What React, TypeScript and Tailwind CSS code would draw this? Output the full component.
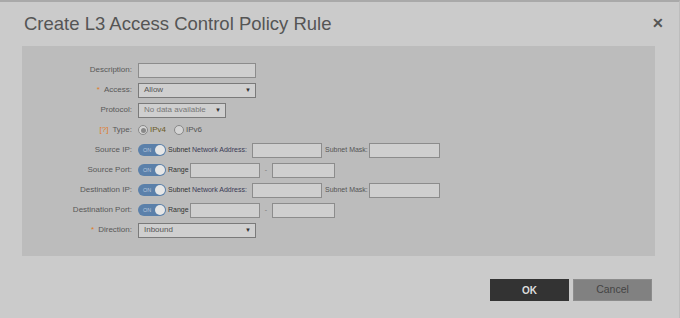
import React from 'react';

const font = { fontFamily: '"Liberation Sans", Arial, sans-serif' };

const Label: React.FC<{ text: string; mark?: string }> = ({ text, mark }) => (
  <div className="flex justify-end items-center text-[8px] text-[#585858] pr-[6px]">
    {mark && <span className="text-[#e07b1f] mr-[4px]">{mark}</span>}
    {text}
  </div>
);

const Input: React.FC<{ w: string }> = ({ w }) => (
  <div className={`${w} h-[15px] shrink-0 bg-[#cfcfcf] border border-[#8c8c8c]`} />
);

const Select: React.FC<{ w: string; value: string; dim?: boolean }> = ({ w, value, dim }) => (
  <div
    className={`${w} h-[15px] bg-[#cfcfcf] border border-[#7a7a7a] flex items-center justify-between pl-[5px] pr-[4px] text-[8px] ${
      dim ? 'text-[#777]' : 'text-[#555]'
    }`}
  >
    <span>{value}</span>
    <span className="text-[6px] text-[#333]">▼</span>
  </div>
);

const Toggle: React.FC = () => (
  <div className="w-[28px] h-[12px] shrink-0 rounded-full bg-[#5b80aa] flex items-center justify-between pl-[5px] pr-[1px]">
    <span className="text-[5.5px] text-[#b8c8dc]">ON</span>
    <span className="w-[10px] h-[10px] rounded-full bg-[#e6e6e6]" />
  </div>
);

const Row: React.FC<{ label: string; mark?: string; children: React.ReactNode }> = ({ label, mark, children }) => (
  <div className="grid grid-cols-[116px_1fr] h-[20px]">
    <Label text={label} mark={mark} />
    <div className="flex items-center text-[7px] whitespace-nowrap">{children}</div>
  </div>
);

const SubnetFields: React.FC = () => (
  <>
    <Toggle />
    <span className="ml-[2px] w-[24px] shrink-0 text-[#333]">Subnet</span>
    <span className="w-[60px] shrink-0 text-[#3a3a55]">Network Address:</span>
    <Input w="w-[70px]" />
    <span className="ml-[3px] w-[44px] shrink-0 text-[#555]">Subnet Mask:</span>
    <Input w="w-[71px]" />
  </>
);

const RangeFields: React.FC = () => (
  <>
    <Toggle />
    <span className="ml-[2px] w-[22px] shrink-0 text-[#333]">Range</span>
    <Input w="w-[70px]" />
    <span className="w-[12px] shrink-0 text-center text-[#777]">-</span>
    <Input w="w-[63px]" />
  </>
);

export default function App() {
  return (
    <div style={font} className="w-[680px] h-[318px] bg-[#cbcbcb] border-t-2 border-[#a9a9a9] border-r border-r-[#bdbdbd] flex flex-col">
      <div className="flex items-start justify-between pl-[24px] pr-[15px] pt-[11px] h-[44px]">
        <h1 className="text-[18.5px] text-[#555] leading-[22px]">Create L3 Access Control Policy Rule</h1>
        <span className="text-[14px] font-bold text-[#555] leading-none mt-[3px]">✕</span>
      </div>
      <div className="ml-[22px] w-[633px] bg-[#bcbcbc] pt-[14px] pb-[16px]">
        <Row label="Description:">
          <Input w="w-[118px]" />
        </Row>
        <Row label="Access:" mark="*">
          <Select w="w-[118px]" value="Allow" />
        </Row>
        <Row label="Protocol:">
          <Select w="w-[88px]" value="No data available" dim />
        </Row>
        <Row label="Type:" mark="[?]">
          <div className="flex items-center text-[8px]">
            <span className="w-[10px] h-[10px] rounded-full border border-[#888] bg-[#d4d4d4] flex items-center justify-center">
              <span className="w-[5px] h-[5px] rounded-full bg-[#888]" />
            </span>
            <span className="ml-[2px] text-[#6b5a1e]">IPv4</span>
            <span className="ml-[8px] w-[10px] h-[10px] rounded-full border border-[#888] bg-[#d4d4d4]" />
            <span className="ml-[2px] text-[#555]">IPv6</span>
          </div>
        </Row>
        <Row label="Source IP:">
          <SubnetFields />
        </Row>
        <Row label="Source Port:">
          <RangeFields />
        </Row>
        <Row label="Destination IP:">
          <SubnetFields />
        </Row>
        <Row label="Destination Port:">
          <RangeFields />
        </Row>
        <Row label="Direction:" mark="*">
          <Select w="w-[118px]" value="Inbound" />
        </Row>
      </div>
      <div className="flex justify-end gap-[4px] pr-[27px] mt-[23px]">
        <button className="w-[79px] h-[22px] bg-[#333] text-[#ddd] text-[10px] font-bold">OK</button>
        <button className="w-[79px] h-[22px] bg-[#818181] border border-[#8c8c8c] text-[#444] text-[10.5px]">Cancel</button>
      </div>
    </div>
  );
}
